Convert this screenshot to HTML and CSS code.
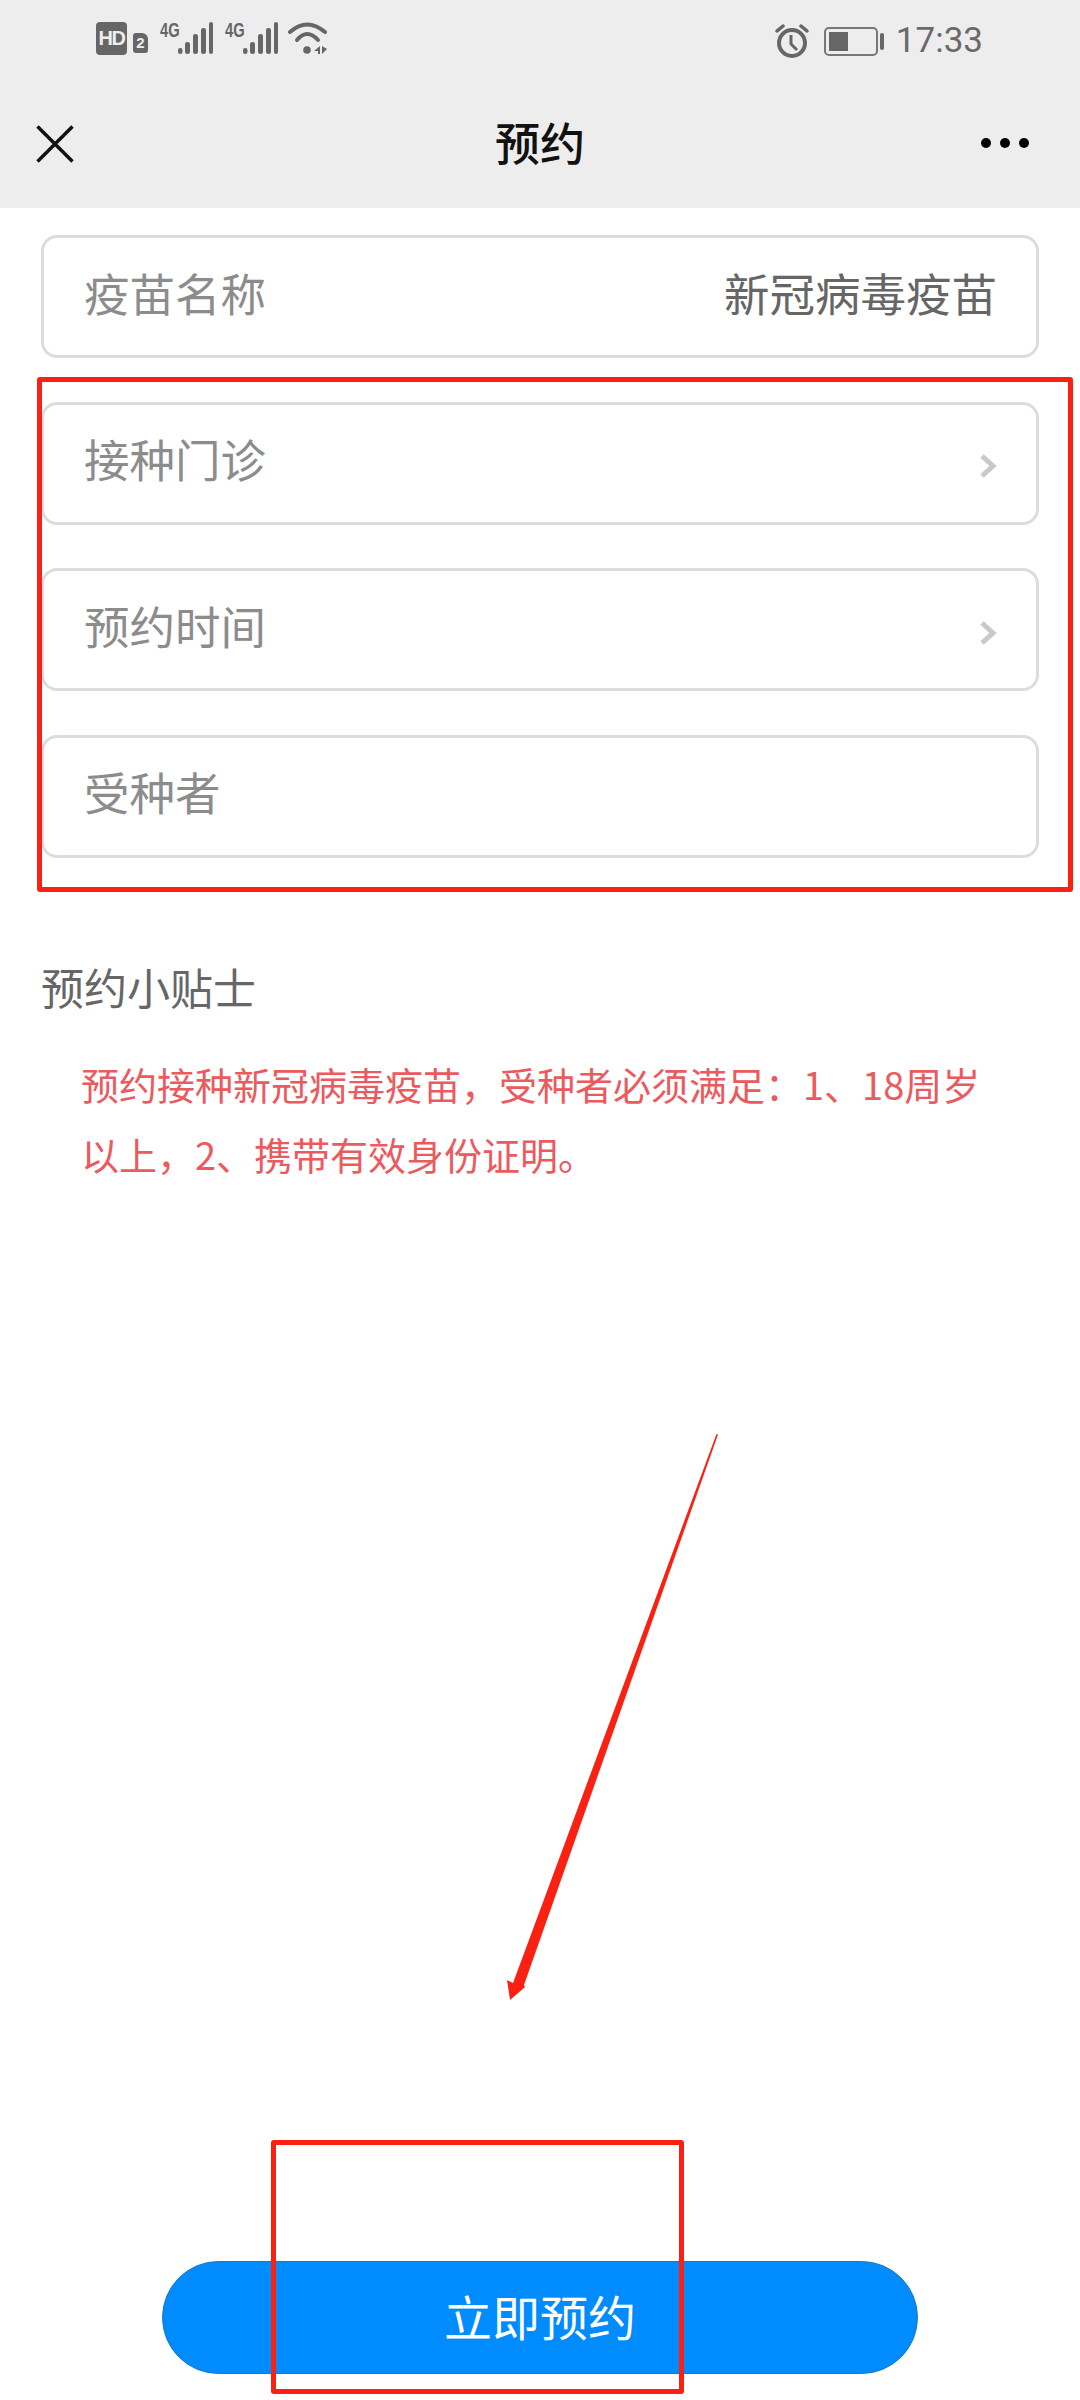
FILE: index.html
```html
<!DOCTYPE html>
<html lang="zh-CN">
<head>
    <meta charset="UTF-8">
    <meta name="viewport" content="width=device-width, initial-scale=1.0">
    <title>预约</title>
    <link rel="stylesheet" href="styles.css">
</head>
<body>
    <div class="top-area">
        <!-- Status bar -->
        <div class="status-bar">
            <div class="status-left">
                <div class="hd-badge">HD</div>
                <div class="sim-badge">2</div>
                <div class="signal">
                    <span class="net-label">4G</span>
                    <svg width="35" height="32" viewBox="0 0 35 32"><g fill="#666"><rect x="0" y="26" width="4.500" height="6" rx="2.200"/><rect x="7" y="20" width="5" height="12" rx="2.200"/><rect x="15" y="12" width="5" height="20" rx="2.200"/><rect x="23" y="6" width="5" height="26" rx="2.200"/><rect x="31" y="0" width="4" height="32" rx="2"/></g></svg>
                </div>
                <div class="signal">
                    <span class="net-label">4G</span>
                    <svg width="35" height="32" viewBox="0 0 35 32"><g fill="#666"><rect x="0" y="26" width="4.500" height="6" rx="2.200"/><rect x="7" y="20" width="5" height="12" rx="2.200"/><rect x="15" y="12" width="5" height="20" rx="2.200"/><rect x="23" y="6" width="5" height="26" rx="2.200"/><rect x="31" y="0" width="4" height="32" rx="2"/></g></svg>
                </div>
                <svg class="wifi" width="40" height="32" viewBox="0 0 40 32">
                    <g fill="none" stroke="#666" stroke-width="4" stroke-linecap="round">
                        <path d="M2 10 Q19 -5 37 10"/>
                        <path d="M9 18 Q19 6 30 18"/>
                    </g>
                    <circle cx="19" cy="28" r="3.800" fill="#666"/>
                    <path d="M32 24 L26 29 L30 29 L30 32 L32 32 Z M34 24 L34 32 L39 27 Z" fill="#666"/>
                </svg>
            </div>
            <div class="status-right">
                <svg width="34" height="34" viewBox="0 0 34 34">
                    <circle cx="17" cy="19" r="13" fill="none" stroke="#666" stroke-width="4"/>
                    <path d="M16 11 V20 L22 26" fill="none" stroke="#666" stroke-width="3"/>
                    <path d="M2 7 L8 2 M32 7 L26 2" stroke="#666" stroke-width="3.500" stroke-linecap="round"/>
                </svg>
                <div class="battery">
                    <div class="battery-body"><div class="battery-level"></div></div>
                    <div class="battery-nub"></div>
                </div>
                <span class="clock">17:33</span>
            </div>
        </div>

        <!-- Title bar -->
        <div class="title-bar">
            <svg width="38" height="38" viewBox="0 0 38 38"><path d="M1.500 1.500 L36.500 36.500 M36.500 1.500 L1.500 36.500" stroke="#111" stroke-width="3.500"/></svg>
            <h1 class="page-title">预约</h1>
            <div class="more-dots"><span></span><span></span><span></span></div>
        </div>
    </div>

    <div class="content">
        <div class="field-list">
            <div class="field">
                <span class="field-label">疫苗名称</span>
                <span class="field-value">新冠病毒疫苗</span>
            </div>
            <div class="field">
                <span class="field-label">接种门诊</span>
                <svg class="chevron" width="18" height="24" viewBox="0 0 18 24"><path d="M3 2 L14 12 L3 22" fill="none" stroke="#c8c8cd" stroke-width="5"/></svg>
            </div>
            <div class="field">
                <span class="field-label">预约时间</span>
                <svg class="chevron" width="18" height="24" viewBox="0 0 18 24"><path d="M3 2 L14 12 L3 22" fill="none" stroke="#c8c8cd" stroke-width="5"/></svg>
            </div>
            <div class="field">
                <span class="field-label">受种者</span>
            </div>
        </div>

        <h2 class="tips-title">预约小贴士</h2>
        <p class="tips-text">预约接种新冠病毒疫苗，受种者必须满足：1、18周岁以上，2、携带有效身份证明。</p>

        <button class="book-btn">立即预约</button>
    </div>

    <!-- Red annotations drawn on top of the screenshot -->
    <div class="mark mark-fields"></div>
    <div class="mark mark-button"></div>
    <svg class="mark-arrow" width="1080" height="2400" viewBox="0 0 1080 2400">
        <path d="M716.500 1434 L718 1434.500 L524 1985 L525 1987 L510 2000 L507 1980 L513 1983 Z" fill="#fb2112"/>
    </svg>
</body>
</html>
```

FILE: styles.css
```css
* {
    box-sizing: border-box;
}
html, body {
    margin: 0;
    padding: 0;
}
body {
    position: relative;
    width: 1080px;
    height: 2400px;
    display: flex;
    flex-direction: column;
    background: #fff;
    font-family: "Noto Sans CJK SC", "Noto Sans", sans-serif;
    overflow: hidden;
}

/* Grey top area */
.top-area {
    height: 208px;
    background: #ededed;
}
.status-bar {
    height: 80px;
    padding: 22px 97px 0 96px;
    display: flex;
    justify-content: space-between;
    align-items: flex-start;
}
.status-left, .status-right {
    display: flex;
    align-items: flex-start;
}
.hd-badge {
    width: 31px;
    height: 33px;
    background: #666;
    border-radius: 4px;
    color: #ededed;
    font-family: "Liberation Sans", sans-serif;
    font-weight: bold;
    font-size: 20px;
    letter-spacing: -1.500px;
    line-height: 33px;
    text-align: center;
}
.sim-badge {
    width: 15px;
    height: 20px;
    margin: 11px 0 0 6px;
    background: #666;
    border-radius: 3px 6px 3px 3px;
    color: #ededed;
    font-family: "Liberation Sans", sans-serif;
    font-weight: bold;
    font-size: 15px;
    line-height: 20px;
    text-align: center;
}
.signal {
    display: flex;
    align-items: flex-start;
    width: 53px;
    margin-left: 12px;
}
.net-label {
    width: 18px;
    color: #666;
    font-family: "Liberation Sans", sans-serif;
    font-weight: bold;
    font-size: 21px;
    line-height: 15px;
    white-space: nowrap;
    transform: scaleX(0.7);
    transform-origin: left top;
}
.wifi {
    margin-left: 10px;
}
.status-right {
    align-items: center;
    height: 34px;
    margin-top: 2px;
}
.battery {
    display: flex;
    align-items: center;
    margin-left: 15px;
}
.battery-body {
    width: 54px;
    height: 29px;
    padding: 3px;
    border: 2px solid #777;
    border-radius: 5px;
}
.battery-level {
    width: 19px;
    height: 100%;
    background: #666;
}
.battery-nub {
    width: 4px;
    height: 17px;
    margin-left: 2px;
    background: #666;
    border-radius: 2px;
}
.clock {
    margin-left: 12px;
    color: #6a6a6a;
    font-family: Roboto, sans-serif;
    font-size: 35px;
    line-height: 34px;
}
.title-bar {
    position: relative;
    height: 128px;
    padding: 45px 51px 0 36px;
    display: flex;
    justify-content: space-between;
    align-items: flex-start;
}
.page-title {
    position: absolute;
    left: 0;
    right: 0;
    top: 30px;
    margin: 0;
    color: #111;
    font-size: 45px;
    font-weight: 500;
    line-height: 64px;
    text-align: center;
}
.more-dots {
    display: flex;
    gap: 9px;
    margin-top: 13px;
}
.more-dots span {
    width: 10px;
    height: 10px;
    border-radius: 50%;
    background: #000;
}

/* Form */
.content {
    flex: 1;
    display: flex;
    flex-direction: column;
    padding: 27px 41px 26px 41px;
}
.field-list {
    display: flex;
    flex-direction: column;
    gap: 43.500px;
}
.field {
    height: 123px;
    padding: 0 39px 0 40px;
    display: flex;
    justify-content: space-between;
    align-items: center;
    border: 3px solid #dcdcdc;
    border-radius: 16px;
}
.field-label {
    color: #8c8c8c;
    font-size: 45.500px;
    line-height: 60px;
    margin-bottom: 10px;
}
.field-value {
    color: #666;
    font-size: 45.500px;
    line-height: 60px;
    margin-bottom: 10px;
}
.chevron {
    margin: 6px 0 0 0;
}
.tips-title {
    margin: 96px 0 0 0;
    color: #666;
    font-size: 43px;
    font-weight: 400;
    line-height: 64px;
}
.tips-text {
    margin: 31px 50px 0 40px;
    color: #ea5a5e;
    font-size: 38px;
    line-height: 70px;
}
.book-btn {
    display: block;
    width: 756px;
    height: 113px;
    margin: auto 0 0 121px;
    padding: 0 0 6px 0;
    background: #008cff;
    border: 1px solid #1a78c2;
    border-radius: 57px;
    color: #fff;
    font-family: inherit;
    font-size: 48px;
    line-height: 60px;
}

/* Annotations */
.mark {
    position: absolute;
    border: 5px solid #fb2112;
    border-radius: 3px;
}
.mark-fields {
    left: 37px;
    top: 377px;
    width: 1036px;
    height: 515px;
}
.mark-button {
    left: 271px;
    top: 2140px;
    width: 413px;
    height: 254px;
}
.mark-arrow {
    position: absolute;
    left: 0;
    top: 0;
}
```
